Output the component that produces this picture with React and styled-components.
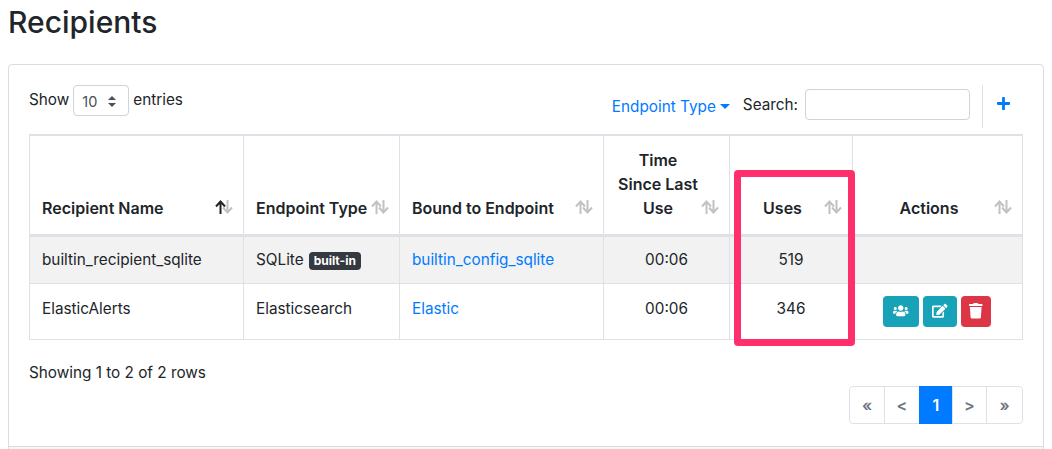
import React from "react";
import styled, { createGlobalStyle } from "styled-components";
import { FaUsers, FaEdit, FaTrash, FaPlus } from "react-icons/fa";

const GlobalStyle = createGlobalStyle`
html, body {
  margin: 0;
  background: #fff;
  overflow: hidden;
}
body {
  font-family: Inter, "Liberation Sans", sans-serif;
  font-size: 15.3px;
  color: #212529;
}
`;

const Page = styled.div`
  width: 1052px;
  height: 449px;
  padding-left: 8px;
  box-sizing: border-box;
  overflow: hidden;
`;

const Title = styled.h1`
  margin: 0;
  height: 64px;
  box-sizing: border-box;
  padding-top: 4px;
  font-size: 30px;
  line-height: 36px;
  font-weight: 500;
`;

const Card = styled.div`
  position: relative;
  width: 1036px;
  height: 420px;
  box-sizing: border-box;
  border: 1px solid #dadcdf;
  border-radius: 4px;
`;

const CardBody = styled.div`
  height: 381px;
  box-sizing: border-box;
  padding: 20px 20px 0 20px;
`;

const CardFooter = styled.div`
  height: 38px;
  border-top: 1px solid #dadcdf;
  background: #f7f7f7;
`;

const Toolbar = styled.div`
  display: flex;
  justify-content: space-between;
  height: 50px;
`;

const ShowEntries = styled.label`
  display: flex;
  align-items: flex-start;
  gap: 4px;
  line-height: 29px;
`;

const FakeSelect = styled.div`
  width: 56px;
  height: 31px;
  box-sizing: border-box;
  border: 1px solid #ced4da;
  border-radius: 4px;
  display: flex;
  align-items: center;
  justify-content: space-between;
  padding: 2px 12px 0 8px;
  font-size: 14.5px;
  color: #495057;
`;

const Filters = styled.div`
  display: flex;
  align-items: flex-start;
  padding-top: 4px;
`;

const FilterLink = styled.a`
  color: #007bff;
  line-height: 31px;
  margin-right: 13px;
  padding-top: 2px;
  &::after {
    content: "";
    display: inline-block;
    margin-left: 4px;
    vertical-align: 3px;
    border-top: 5px solid #007bff;
    border-left: 5px solid transparent;
    border-right: 5px solid transparent;
  }
`;

const SearchLabel = styled.span`
  line-height: 31px;
  margin-right: 7px;
`;

const SearchInput = styled.input`
  width: 165px;
  height: 31px;
  box-sizing: border-box;
  border: 1px solid #ced4da;
  border-radius: 4px;
  outline: none;
`;

const AddBox = styled.div`
  width: 41px;
  height: 43px;
  margin: -4px 0 0 12px;
  border-left: 1px solid #dee2e6;
  display: flex;
  justify-content: center;
  padding: 11px 0 0 0;
  box-sizing: border-box;
  color: #007bff;
  font-size: 15px;
`;

const Table = styled.table`
  width: 993px;
  margin-top: -1px;
  border-collapse: collapse;
  table-layout: fixed;
`;

const HeadCell = styled.th`
  position: relative;
  height: 100px;
  box-sizing: border-box;
  border: 1px solid #dee2e6;
  border-top-width: 2px;
  border-bottom-width: 3px;
  padding: ${(p) => (p.$center ? "0 29px 14px 12px" : "0 12px 14px")};
  vertical-align: bottom;
  font-weight: 600;
  font-size: 16px;
  line-height: 24px;
  text-align: ${(p) => (p.$center ? "center" : "left")};
`;

const Sort = styled.svg`
  position: absolute;
  right: 10px;
  bottom: 20px;
  width: 18px;
  height: 14px;
`;

const Row = styled.tr`
  background: ${(p) => (p.$shaded ? "#f2f2f2" : "#fff")};
`;

const Cell = styled.td`
  height: ${(p) => (p.$tall ? 56 : 48)}px;
  box-sizing: border-box;
  border: 1px solid #dee2e6;
  padding: ${(p) => (p.$tall ? "0 12px 6px" : "0 12px")};
  font-size: 15.3px;
  text-align: ${(p) => (p.$center ? "center" : "left")};
`;

const TextLink = styled.a`
  color: #007bff;
`;

const Badge = styled.span`
  display: inline-block;
  margin-left: 5px;
  padding: 0 5px;
  height: 18px;
  line-height: 18px;
  border-radius: 4px;
  background: #343a40;
  color: #fff;
  font-size: 12px;
  font-weight: 700;
`;

const Actions = styled.div`
  display: flex;
  gap: 4px;
  padding: 6px 0 0 18px;
`;

const ActionButton = styled.button`
  width: ${(p) => p.$w}px;
  height: 31px;
  padding: 0;
  border: none;
  border-radius: 4px;
  background: ${(p) => (p.$danger ? "#dc3545" : "#17a2b8")};
  color: #fff;
  font-size: 15.5px;
  display: flex;
  align-items: center;
  justify-content: center;
`;

const Footer = styled.div`
  padding-top: 23px;
  line-height: 20px;
`;

const Pager = styled.div`
  display: flex;
  justify-content: flex-end;
  margin: 3px 0 0 0;
  width: 994px;
`;

const PageItem = styled.div`
  width: ${(p) => p.$w}px;
  height: 38px;
  box-sizing: border-box;
  border: 1px solid #dee2e6;
  margin-left: -1px;
  display: flex;
  align-items: center;
  justify-content: center;
  color: ${(p) => (p.$active ? "#fff" : "#6c757d")};
  background: ${(p) => (p.$active ? "#007bff" : "#fff")};
  border-color: ${(p) => (p.$active ? "#007bff" : "#dee2e6")};
  font-weight: 600;
  font-size: 16px;
  &:first-child { border-radius: 4px 0 0 4px; }
  &:last-child { border-radius: 0 4px 4px 0; }
`;

const Highlight = styled.div`
  position: absolute;
  left: 725px;
  top: 105px;
  width: 121px;
  height: 176px;
  box-sizing: border-box;
  border: 7px solid #ff2f6e;
  border-radius: 4px;
  pointer-events: none;
`;

const SortIcon = ({ active }) => (
  <Sort viewBox="0 0 18 14" fill="none" strokeWidth="2">
    <path d="M12.5 0v12.5M8 7.5l4.5 5 4.5-5" stroke="#c2c2c2" />
    <path d="M5.5 14V1.5M1 6.5l4.5-5 4.5 5" stroke={active ? "#212529" : "#c2c2c2"} />
  </Sort>
);

const SelectArrows = () => (
  <svg width="8" height="11" viewBox="0 0 8 11" fill="#495057">
    <path d="M4 0 8 4H0zM4 11 0 7h8z" />
  </svg>
);

const columns = [
  { label: "Recipient Name", width: 214, active: true },
  { label: "Endpoint Type", width: 156 },
  { label: "Bound to Endpoint", width: 204 },
  { label: <>Time<br />Since Last<br />Use</>, width: 126, center: true },
  { label: "Uses", width: 123, center: true },
  { label: "Actions", width: 170, center: true },
];

export default function App() {
  return (
    <Page>
      <GlobalStyle />
      <Title>Recipients</Title>
      <Card>
        <CardBody>
          <Toolbar>
            <ShowEntries>
              Show
              <FakeSelect>10 <SelectArrows /></FakeSelect>
              entries
            </ShowEntries>
            <Filters>
              <FilterLink>Endpoint Type</FilterLink>
              <SearchLabel>Search:</SearchLabel>
              <SearchInput />
              <AddBox><FaPlus /></AddBox>
            </Filters>
          </Toolbar>
          <Table>
            <colgroup>
              {columns.map((c, i) => <col key={i} style={{ width: c.width }} />)}
            </colgroup>
            <thead>
              <tr>
                {columns.map((c, i) => (
                  <HeadCell key={i} $center={c.center}>
                    {c.label}
                    <SortIcon active={c.active} />
                  </HeadCell>
                ))}
              </tr>
            </thead>
            <tbody>
              <Row $shaded>
                <Cell>builtin_recipient_sqlite</Cell>
                <Cell>SQLite<Badge>built-in</Badge></Cell>
                <Cell><TextLink>builtin_config_sqlite</TextLink></Cell>
                <Cell $center>00:06</Cell>
                <Cell $center>519</Cell>
                <Cell />
              </Row>
              <Row>
                <Cell $tall>ElasticAlerts</Cell>
                <Cell $tall>Elasticsearch</Cell>
                <Cell $tall><TextLink>Elastic</TextLink></Cell>
                <Cell $tall $center>00:06</Cell>
                <Cell $tall $center>346</Cell>
                <Cell $tall>
                  <Actions>
                    <ActionButton $w={36}><FaUsers /></ActionButton>
                    <ActionButton $w={34}><FaEdit /></ActionButton>
                    <ActionButton $w={30} $danger><FaTrash /></ActionButton>
                  </Actions>
                </Cell>
              </Row>
            </tbody>
          </Table>
          <Footer>Showing 1 to 2 of 2 rows</Footer>
          <Pager>
            <PageItem $w={36}>«</PageItem>
            <PageItem $w={36}>&lt;</PageItem>
            <PageItem $w={34} $active>1</PageItem>
            <PageItem $w={35}>&gt;</PageItem>
            <PageItem $w={37}>»</PageItem>
          </Pager>
        </CardBody>
        <CardFooter />
        <Highlight />
      </Card>
    </Page>
  );
}
